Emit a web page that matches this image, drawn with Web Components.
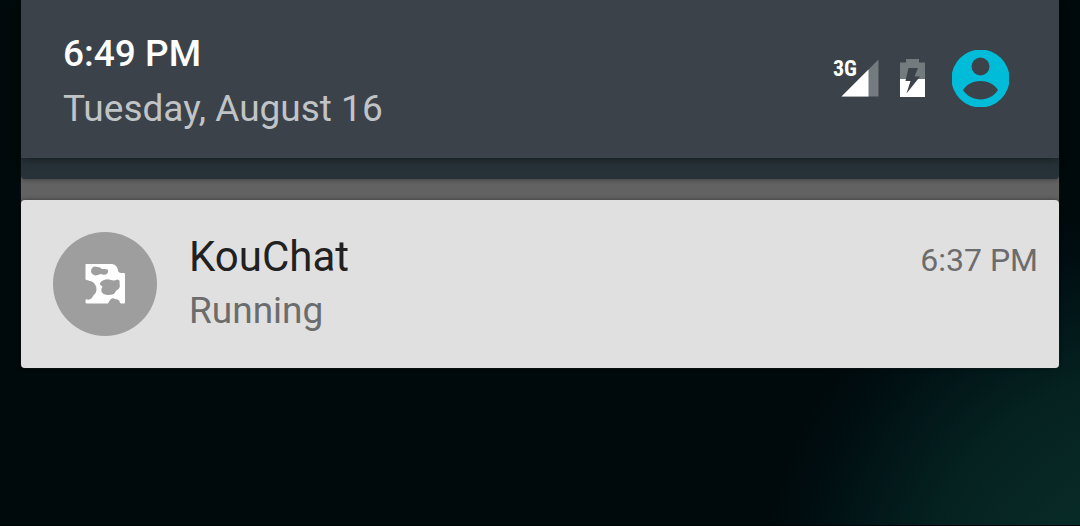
<!DOCTYPE html>
<html lang="en">
<head>
<meta charset="utf-8">
<meta name="viewport" content="width=device-width, initial-scale=1">
<title>Notification shade</title>
<style>
html { height: 100%; }
body {
  margin: 0;
  min-height: 100%;
  font-family: Roboto, "Liberation Sans", sans-serif;
  background:
    linear-gradient(#000405, #000405) bottom / 100% 1px no-repeat,
    radial-gradient(circle 400px at calc(100% + 70px) calc(100% + 74px), #0a302b 0, #082a27 28%, #052221 55%, #021719 73%, #000e11 87%, rgba(0, 9, 11, 0) 100%),
    #00090b;
}
</style>
</head>
<body>
<notification-shade>
  <shade-header slot="header" time="6:49 PM" date="Tuesday, August 16">
    <signal-icon></signal-icon>
    <battery-icon></battery-icon>
    <user-button></user-button>
  </shade-header>
  <notification-card heading="KouChat" text="Running" time="6:37 PM">
    <kouchat-icon slot="icon"></kouchat-icon>
  </notification-card>
</notification-shade>

<script>
class ShadowElement extends HTMLElement {
  constructor() {
    super();
    this.attachShadow({ mode: "open" }).innerHTML = this.constructor.markup;
  }
  connectedCallback() {
    for (const el of this.shadowRoot.querySelectorAll("[data-attr]")) {
      el.textContent = this.getAttribute(el.dataset.attr);
    }
  }
}

customElements.define("notification-shade", class extends ShadowElement {
  static markup = `
    <style>
      :host { display: block; padding: 0 21px; }
      .stack { background: #626262; border-radius: 4px; box-shadow: 0 0 2px rgba(90, 90, 90, .4); }
      .behind { padding-bottom: 21px; background: #263238; border-radius: 0 0 4px 4px; box-shadow: 0 1px 4px rgba(0, 0, 0, .35); }
      main { padding-top: 21px; }
    </style>
    <div class="stack">
      <div class="behind"><slot name="header"></slot></div>
      <main><slot></slot></main>
    </div>`;
});

customElements.define("shade-header", class extends ShadowElement {
  static markup = `
    <style>
      :host { display: block; background: #3b4249; box-shadow: 0 2px 8px rgba(0, 0, 0, .4); }
      header { display: flex; justify-content: space-between; align-items: center; padding: 26px 50px 22px 42px; }
      .clock { display: flex; flex-direction: column; font-size: 37px; line-height: 55px; white-space: nowrap; }
      .time { color: #fff; font-weight: 500; }
      .date { color: #c1c4c6; }
      .status { display: flex; align-items: center; gap: 21px; padding-bottom: 6px; }
    </style>
    <header>
      <div class="clock"><time class="time" data-attr="time"></time><time class="date" data-attr="date"></time></div>
      <div class="status"><slot></slot></div>
    </header>`;
});

customElements.define("signal-icon", class extends ShadowElement {
  static markup = `
    <style>
      :host { display: block; position: relative; width: 46px; height: 38px; }
      svg { display: block; }
      span { position: absolute; left: 0; top: 0; color: #fff; font: 700 22px/20px "Roboto Condensed", Roboto, sans-serif; }
    </style>
    <svg width="46" height="38" viewBox="0 0 46 38" aria-hidden="true">
      <path d="M45.500 .5V37.500H8.500Z" fill="#747b7e"/><path d="M35.500 10.500V37.500H8.500Z" fill="#fff"/>
    </svg>
    <span>3G</span>`;
});

customElements.define("battery-icon", class extends ShadowElement {
  static markup = `
    <style>:host { display: block; width: 25px; height: 38px; } svg { display: block; }</style>
    <svg width="25" height="38" viewBox="0 0 25 38" role="img" aria-label="Battery charging">
      <path d="M0 3.500H6V0H19V3.500H25V20H0Z" fill="#747b7e"/>
      <path d="M0 20H25V38H0Z" fill="#fff"/>
      <path d="M8.500 9H18L14.500 17.500H20L6.500 34.500L10.500 22H5.500Z" fill="#3b4249"/>
    </svg>`;
});

customElements.define("user-button", class extends ShadowElement {
  static markup = `
    <style>
      :host { display: block; padding-left: 5px; }
      button { display: block; padding: 0; border: 0; background: none; cursor: pointer; }
      svg { display: block; overflow: visible; }
    </style>
    <button type="button" aria-label="Switch user">
      <svg width="58" height="58" viewBox="0 0 58 58">
        <clipPath id="edge"><rect x="1" y="1" width="57" height="57"/></clipPath>
        <circle cx="29.500" cy="29.500" r="29" fill="#00bcd8" clip-path="url(#edge)"/>
        <circle cx="29.500" cy="17.500" r="9" fill="#3b4249"/>
        <path d="M12 41C16 35 22.500 32 29.500 32S43 35 47 41C43 47 36.500 50.500 29.500 50.500S16 47 12 41Z" fill="#3b4249"/>
      </svg>
    </button>`;
});

customElements.define("notification-card", class extends ShadowElement {
  static markup = `
    <style>
      :host { display: block; }
      article { display: flex; align-items: flex-start; gap: 32px; padding: 29px 21px 31px 32px; background: #e0e0e0; border-radius: 4px; box-shadow: 0 0 4px rgba(0, 0, 0, .45); }
      .icon { padding-top: 3px; }
      .body { flex: 1; min-width: 0; }
      .top { display: flex; justify-content: space-between; align-items: baseline; }
      h2, p { margin: 0; font-weight: 400; }
      h2 { font-size: 42px; line-height: 56px; color: #212121; }
      time { font-size: 32px; line-height: 40px; color: #6c6c6c; }
      p { font-size: 37px; line-height: 52px; color: #6c6c6c; }
    </style>
    <article>
      <div class="icon"><slot name="icon"></slot></div>
      <div class="body">
        <div class="top"><h2 data-attr="heading"></h2><time data-attr="time"></time></div>
        <p data-attr="text"></p>
      </div>
    </article>`;
});

customElements.define("kouchat-icon", class extends ShadowElement {
  static markup = `
    <style>:host { display: block; } svg { display: block; }</style>
    <svg width="104" height="104" viewBox="0 0 104 104" aria-hidden="true">
      <circle cx="52" cy="52" r="52" fill="#9e9e9e"/>
      <path fill="#fff" fill-rule="evenodd" d="M33 32H59Q62 32 63.500 34.500Q65 36 65 39Q66 41 68 41H71Q72 41 72 42V70Q72 71.500 71 71.500H68Q66.500 71 66.500 69Q65 67 62 67Q60 65.500 58 67Q56 69 55 71.500H33.500Q32 71 32.500 69L33 67Q35 68.500 37.500 67Q39 66.500 40 64Q43.500 61 43.500 58Q44 55 42 52.500Q40 49 36.500 49Q35 48 33 48Q32 47 32.500 45V33Q32.500 32 33 32Z
        M40 35Q37.500 37 38 40Q39 43 42 43.500Q45 43 47.500 42Q50 43 53 42.500Q55.500 41 55 38Q54 36.500 49 37Q46.500 34.500 44 35Q42 34 40 35Z
        M51 48Q48.500 48.500 47 51Q46.500 53 49.500 54.500Q47.500 57 48.500 60Q50 62.500 54 63Q59 63 61 62Q63 58 65.500 57Q67.500 55 66.500 51Q67.500 48 64.500 47.500Q61 49 58 48Q54 46.500 51 48Z"/>
    </svg>`;
});
</script>
</body>
</html>
